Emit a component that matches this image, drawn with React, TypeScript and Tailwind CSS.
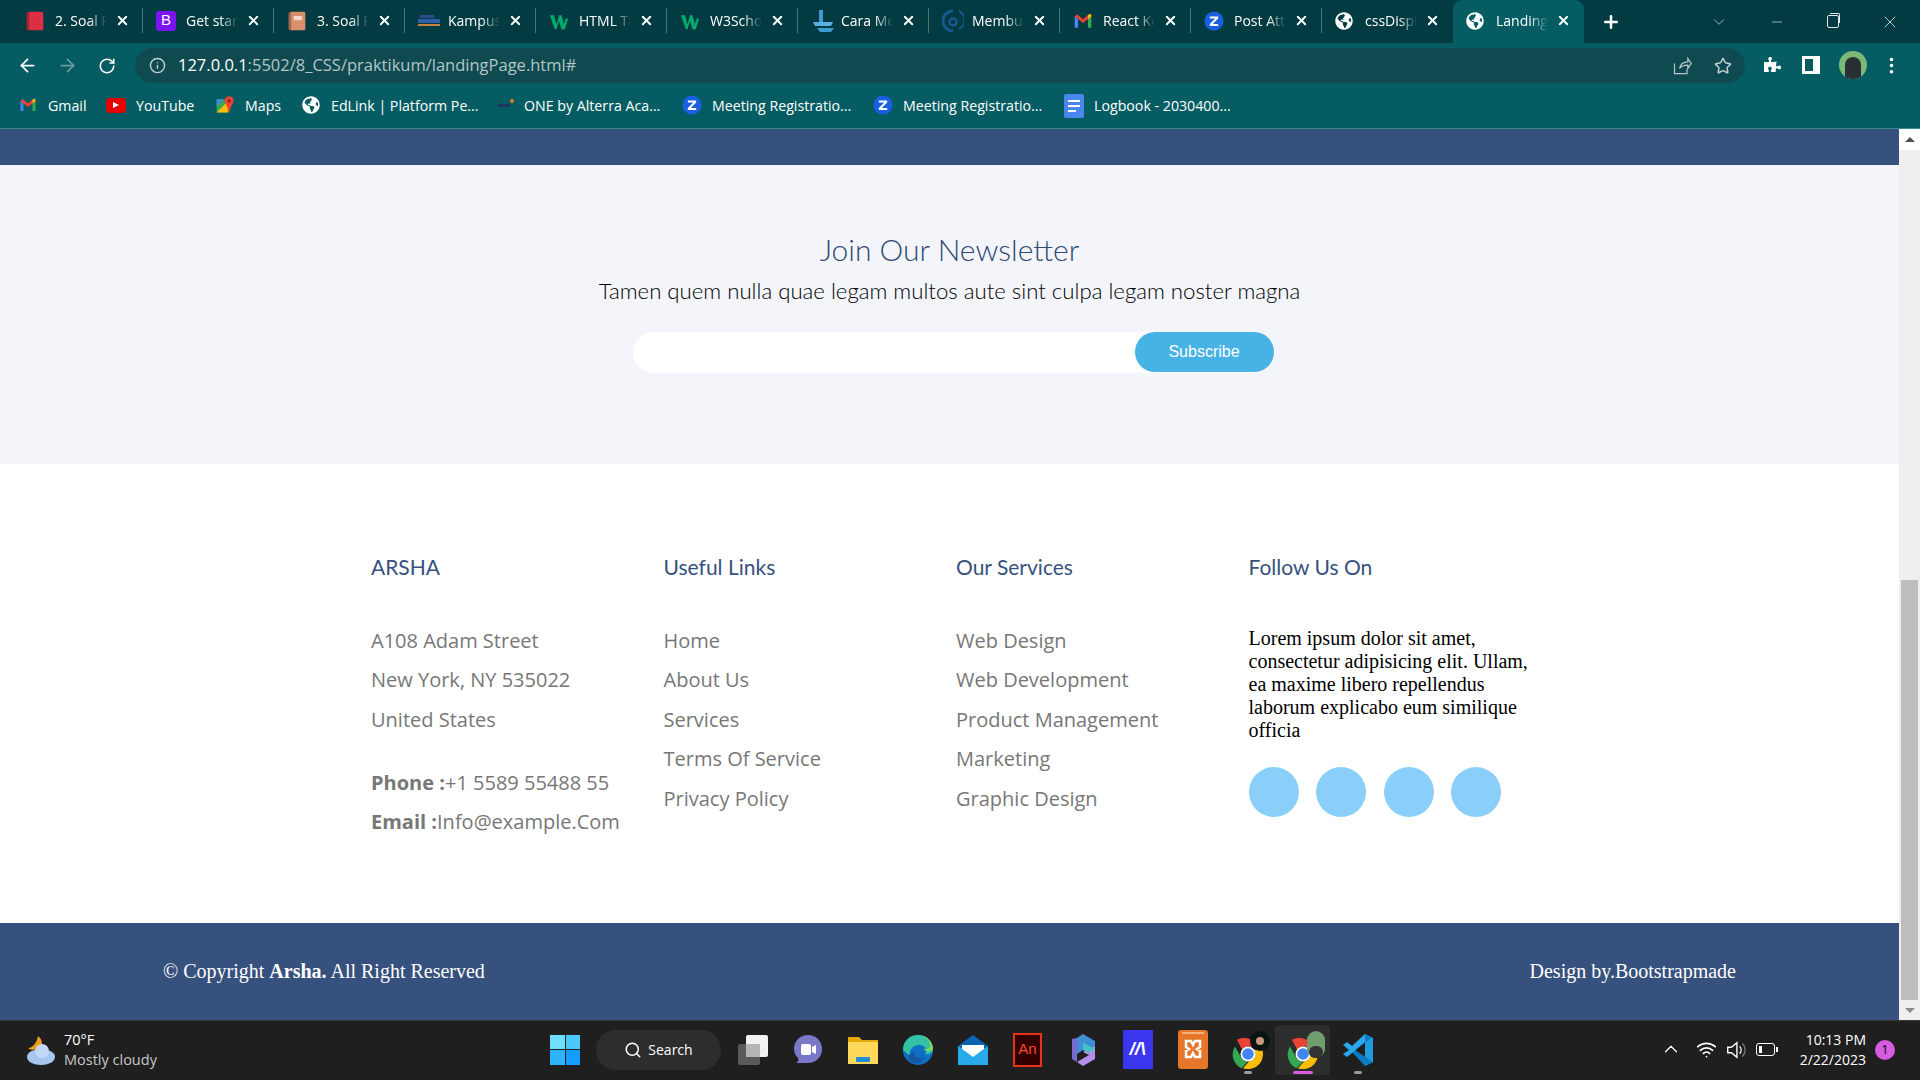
import React from "react";
import {
  ArrowLeft,
  ArrowRight,
  RotateCw,
  Info,
  Star,
  Plus,
  X,
  Minus,
  ChevronDown,
  ChevronUp,
  Wifi,
  Search,
  EllipsisVertical,
} from "lucide-react";
import { FaGlobeAmericas, FaPuzzlePiece } from "react-icons/fa";

const GmailIcon = ({ size = 18 }: { size?: number }) => (
  <svg width={size} height={size} viewBox="0 0 24 24">
    <path d="M2 6v14h4V10z" fill="#4285f4" />
    <path d="M22 6v14h-4V10z" fill="#34a853" />
    <path d="M2 6.5 5 4l7 6 7-6 3 2.500-10 8z" fill="#ea4335" />
    <path d="M18 5v5l4-3.500V5a1.500 1.500 0 0 0-2.500-1z" fill="#fbbc04" />
  </svg>
);

const ZoomIcon = () => (
  <svg width="20" height="20" viewBox="0 0 24 24">
    <circle cx="12" cy="12" r="11.500" fill="#1a5fe0" />
    <path d="M7 6.500h10v2.500l-6.500 6.500H17V18H7v-2.500L13.500 9H7z" fill="#fff" />
  </svg>
);

const WIcon = () => (
  <svg width="20" height="20" viewBox="0 0 24 24">
    <path d="M1 5h5l3 11 3-11h3l3 11 2-7h3l-4 13h-4l-3-10-3 10H7z" fill="#04aa6d" />
  </svg>
);

const BookIcon = ({ color, page }: { color: string; page: string }) => (
  <svg width="20" height="20" viewBox="0 0 24 24">
    <rect x="2" y="1" width="20" height="22" rx="2" fill={color} />
    <rect x="2" y="1" width="3" height="22" fill="#00000040" />
    <rect x="8" y="6" width="10" height="5" rx="1" fill={page} />
  </svg>
);

const BootstrapIcon = () => (
  <div className="w-5 h-5 rounded-[3px] bg-[#7a14f0] text-white flex items-center justify-center text-[15px] font-['Liberation_Sans',sans-serif]">
    B
  </div>
);

const KampusIcon = () => (
  <svg width="22" height="14" viewBox="0 0 22 14">
    <rect x="2" y="1" width="14" height="3" fill="#2d4a8a" />
    <rect x="0" y="5" width="22" height="4" fill="#2f5fa8" />
    <rect x="0" y="10" width="22" height="2" fill="#c9803a" />
  </svg>
);

const CaraIcon = () => (
  <svg width="24" height="24" viewBox="0 0 24 24">
    <path d="M8 1h4v13H8z" fill="#3f9ad0" />
    <path d="M2 13h20l-2 4H4z" fill="#5ab0e0" />
    <path d="M6 19h17l-3 4H9z" fill="#3f9ad0" />
  </svg>
);

const MembuIcon = () => (
  <svg width="22" height="24" viewBox="0 0 22 24">
    <path d="M11 2a10 10 0 1 0 0 20" fill="none" stroke="#17588f" strokeWidth="3" />
    <path d="M17 2a10 10 0 0 1 0 18" fill="none" stroke="#17588f" strokeWidth="2" />
    <circle cx="11" cy="13" r="3.500" fill="none" stroke="#17588f" strokeWidth="2.500" />
  </svg>
);

const Globe = () => <FaGlobeAmericas className="text-white" size={18} />;

const tabs: { title: string; icon: React.ReactNode }[] = [
  { title: "2. Soal Prioritas", icon: <BookIcon color="#dc2f45" page="#dc2f45" /> },
  { title: "Get started", icon: <BootstrapIcon /> },
  { title: "3. Soal Prioritas", icon: <BookIcon color="#d98f6c" page="#f5d8c8" /> },
  { title: "Kampus Merdeka", icon: <KampusIcon /> },
  { title: "HTML Tables", icon: <WIcon /> },
  { title: "W3Schools", icon: <WIcon /> },
  { title: "Cara Membuat", icon: <CaraIcon /> },
  { title: "Membuat", icon: <MembuIcon /> },
  { title: "React Kelas", icon: <GmailIcon size={20} /> },
  { title: "Post Attendance", icon: <ZoomIcon /> },
  { title: "cssDisplay", icon: <Globe /> },
  { title: "Landing Page", icon: <Globe /> },
];

const bookmarks: { title: string; icon: React.ReactNode; width: string }[] = [
  { title: "Gmail", icon: <GmailIcon />, width: "w-[88px]" },
  {
    title: "YouTube",
    icon: (
      <div className="w-5 h-[15px] rounded-[4px] bg-[#e60000] flex items-center justify-center">
        <div className="w-0 h-0 border-y-[3.5px] border-y-transparent border-l-[6px] border-l-white" />
      </div>
    ),
    width: "w-[109px]",
  },
  {
    title: "Maps",
    icon: (
      <svg width="20" height="20" viewBox="0 0 24 24">
        <path d="M2 5h14v16H2z" fill="#34a853" />
        <path d="M2 21 16 7v14z" fill="#fbbc04" />
        <path d="M2 5h8L2 13z" fill="#4285f4" />
        <circle cx="17" cy="7" r="5.500" fill="#ea4335" />
        <path d="M13 10h8l-4 11z" fill="#ea4335" />
        <circle cx="17" cy="7" r="2" fill="#8f1f16" />
      </svg>
    ),
    width: "w-[86px]",
  },
  { title: "EdLink | Platform Pe...", icon: <Globe />, width: "w-[193px]" },
  {
    title: "ONE by Alterra Aca...",
    icon: (
      <div className="w-5 h-5 flex items-center justify-center relative">
        <div className="w-3 h-[3px] bg-[#23345c]" />
        <div className="absolute right-0 top-1 w-1 h-1 rounded-full bg-[#f47c20]" />
      </div>
    ),
    width: "w-[188px]",
  },
  { title: "Meeting Registratio...", icon: <ZoomIcon />, width: "w-[191px]" },
  { title: "Meeting Registratio...", icon: <ZoomIcon />, width: "w-[191px]" },
  {
    title: "Logbook - 2030400...",
    icon: (
      <div className="w-5 h-6 rounded-[2px] bg-[#4a86f0] flex flex-col gap-[3px] justify-center px-1">
        <div className="h-[2px] bg-white" />
        <div className="h-[2px] bg-white" />
        <div className="h-[2px] w-2 bg-white" />
      </div>
    ),
    width: "w-[190px]",
  },
];

const usefulLinks = ["Home", "About Us", "Services", "Terms Of Service", "Privacy Policy"];
const serviceLinks = ["Web Design", "Web Development", "Product Management", "Marketing", "Graphic Design"];

const ChromeIcon = () => (
  <svg width="32" height="32" viewBox="0 0 32 32">
    <path d="M16 1a15 15 0 0 1 13 7.500H16a7.500 7.500 0 0 0-6.500 3.750L3 3.500A15 15 0 0 1 16 1z" fill="#ea4335" transform="rotate(8 16 16)" />
    <path d="M3 8.500 9.500 20a7.500 7.500 0 0 0 6.500 3.500L9.500 30.200A15 15 0 0 1 3 8.500z" fill="#34a853" />
    <path d="M29 8.500A15 15 0 0 1 11 30.200l6-6.800A7.500 7.500 0 0 0 22 12z" fill="#fbbc04" />
    <circle cx="16" cy="16" r="7.500" fill="#fff" />
    <circle cx="16" cy="16" r="5.800" fill="#4285f4" />
  </svg>
);

const taskbarIcons: { icon: React.ReactNode; dot?: string; active?: boolean }[] = [
  {
    icon: (
      <svg width="32" height="32" viewBox="0 0 32 32">
        <rect x="1" y="10" width="22" height="21" rx="2" fill="#5a5a5a" />
        <rect x="9" y="1" width="22" height="22" rx="2" fill="#f2f2f2" />
        <rect x="9" y="10" width="14" height="13" fill="#b5b5b5" />
      </svg>
    ),
  },
  {
    icon: (
      <svg width="30" height="32" viewBox="0 0 30 32">
        <path d="M15 1c8 0 14 6 14 14s-6 14-14 14H3c2-1 3-3 2-5-3-3-4-6-4-9C1 7 7 1 15 1z" fill="#7b77c9" />
        <rect x="8" y="10" width="10" height="11" rx="2" fill="#fff" />
        <path d="m19 13 4-2v9l-4-2z" fill="#fff" />
      </svg>
    ),
  },
  {
    icon: (
      <svg width="32" height="32" viewBox="0 0 32 32">
        <path d="M1 3h11l3 3h16v24H1z" fill="#e3a90d" />
        <path d="M1 8h30v22H1z" fill="#ffd75a" />
        <rect x="9" y="23" width="14" height="5" rx="1" fill="#1e8fe0" />
      </svg>
    ),
  },
  {
    icon: (
      <svg width="32" height="32" viewBox="0 0 32 32">
        <circle cx="16" cy="16" r="15" fill="#0f6fc5" />
        <path d="M1 16C1 7 8 1 16 1c9 0 15 7 15 14 0 4-4 6-8 5 3-4 0-9-6-9-7 0-10 6-9 11z" fill="#35c1a5" />
        <path d="M31 15c0-7-6-14-15-14 6 0 13 5 12 12-2 3-5 2-7 2 4 3 7 3 10 0z" fill="#7ed957" />
        <path d="M12 18c0 5 6 8 11 5-2 5-9 8-14 5-3-2-5-8 3-10z" fill="#1558a8" />
      </svg>
    ),
  },
  {
    icon: (
      <svg width="32" height="32" viewBox="0 0 32 32">
        <path d="M16 1 31 12v19H1V12z" fill="#0a64b4" />
        <path d="M5 11h22v9l-11 6-11-6z" fill="#fff" />
        <path d="M1 12v19h30V12L16 23z" fill="#29aaea" />
      </svg>
    ),
  },
  {
    icon: (
      <div className="w-[29px] h-[34px] bg-[#300] border-2 border-[#e8331c] flex items-center justify-center text-[#ff4a2b] text-[15px] font-['Liberation_Sans',sans-serif]">
        An
      </div>
    ),
  },
  {
    icon: (
      <svg width="28" height="34" viewBox="0 0 28 34">
        <path d="M14 1 26 8v8L14 9v8l-6 4V5z" fill="#3f8fd8" />
        <path d="M3 6v20l5 3V5z" fill="#7a6ad0" />
        <path d="M26 13v13l-12 7-6-4 12-7-6-3z" fill="#b48ee8" />
        <path d="M14 9v8l6 3 6-4z" fill="#48c0c8" />
      </svg>
    ),
  },
  {
    icon: (
      <div className="w-[30px] h-[39px] bg-[#3a36f0] flex items-center justify-center text-white text-[19px] font-bold italic font-['Liberation_Sans',sans-serif]">
        //\
      </div>
    ),
  },
  {
    icon: (
      <svg width="30" height="39" viewBox="0 0 30 39">
        <rect width="30" height="39" rx="3" fill="#e5762a" />
        <rect x="4" y="2" width="22" height="2" fill="#f7b37e" />
        <path d="M8 11h5l2 4 2-4h5v6l-3 2 3 2v6h-5l-2-4-2 4H8v-6l3-2-3-2z" fill="none" stroke="#fff" strokeWidth="2.500" />
      </svg>
    ),
  },
  {
    icon: (
      <div className="relative w-[32px] h-[40px] flex items-end">
        <ChromeIcon />
        <div className="absolute -right-[6px] top-[1px] w-5 h-5 rounded-full bg-[#0b1214] flex items-center justify-center">
          <div className="w-2 h-2 rounded-full bg-[#c89a7c]" />
        </div>
      </div>
    ),
    dot: "w-2 bg-[#9a9a9a]",
  },
  {
    icon: (
      <div className="relative w-[32px] h-[40px] flex items-end">
        <ChromeIcon />
        <div className="absolute -right-[6px] top-[1px] w-[18px] h-[27px] rounded-full bg-[#6f9e6c] flex items-end justify-center">
          <div className="w-[14px] h-3 rounded-full bg-[#333]" />
        </div>
      </div>
    ),
    dot: "w-5 bg-[#d65ce0]",
    active: true,
  },
  {
    icon: (
      <svg width="30" height="34" viewBox="0 0 30 34">
        <path d="M22 1 30 5v24l-8 4z" fill="#1f9ce0" />
        <path d="M22 1 7 17l15 16 8-4-2-1-16-11L28 5z" fill="#0b7ac4" />
        <path d="M22 1v8L9 20l-5 4-4-3 6-4-6-5 4-3 5 4z" fill="#2aa8ee" />
      </svg>
    ),
    dot: "w-2 bg-[#9a9a9a]",
  },
];

function BrowserTab({ title, icon, active, divider }: { title: string; icon: React.ReactNode; active: boolean; divider: boolean }) {
  return (
    <div className={`w-[131px] h-[43px] shrink-0 flex items-center pb-[2px] ${active ? "bg-[#055c62] rounded-t-[9px]" : ""}`}>
      <div className="w-[43px] pl-[13px] shrink-0 flex items-center">{icon}</div>
      <span className="w-[52px] overflow-hidden whitespace-nowrap text-[14px] text-white [mask-image:linear-gradient(to_right,black_65%,transparent)]">
        {title}
      </span>
      <X className="text-white ml-[8px] shrink-0" size={15} strokeWidth={3} />
      {divider && <div className="w-px h-[25px] bg-[#4f7376] ml-auto shrink-0" />}
    </div>
  );
}

function FooterHeading({ children }: { children: React.ReactNode }) {
  return <h4 className="font-['Lato',sans-serif] text-[21px] leading-[30px] text-[#37517e] mb-[39px]">{children}</h4>;
}

function LinkColumn({ title, items }: { title: string; items: string[] }) {
  return (
    <div>
      <FooterHeading>{title}</FooterHeading>
      <ul className="flex flex-col">
        {items.map((item) => (
          <li key={item} className="h-[39.500px] flex items-center text-[20px] text-[#777777]">
            {item}
          </li>
        ))}
      </ul>
    </div>
  );
}

export default function App() {
  return (
    <div className="w-[1920px] h-[1080px] overflow-hidden flex flex-col font-['Open_Sans',sans-serif]">
      {/* tab strip */}
      <div className="h-[43px] bg-[#033b42] flex items-center pl-[12px] shrink-0">
        {tabs.map((tab, i) => (
          <BrowserTab
            key={i}
            title={tab.title}
            icon={tab.icon}
            active={i === tabs.length - 1}
            divider={i < tabs.length - 2}
          />
        ))}
        <Plus className="text-white ml-[17px]" size={20} strokeWidth={3} />
        <ChevronDown className="text-[#c8d6d8] ml-[89px]" size={18} strokeWidth={1} />
        <Minus className="text-[#e0e8e8] ml-[41px]" size={16} strokeWidth={1} />
        <div className="relative w-[12px] h-[13px] ml-[42px] border border-[#e0e8e8] rounded-[2px]">
          <div className="absolute -top-[3px] left-[2px] w-[10px] h-[10px] border-t border-r border-[#e0e8e8] rounded-tr-[2px]" />
        </div>
        <X className="text-[#e0e8e8] ml-[41px]" size={20} strokeWidth={1} />
      </div>

      {/* address bar */}
      <div className="h-[40px] bg-[#055c62] flex items-end pb-0 shrink-0">
        <ArrowLeft className="text-white ml-[17px] mb-[7px]" size={21} />
        <ArrowRight className="text-[#6c9a9d] ml-[19px] mb-[7px]" size={21} />
        <RotateCw className="text-white ml-[20px] mb-[8px]" size={18} />
        <div className="w-[1610px] h-[35px] ml-[19px] rounded-full bg-[#0f4a50] flex items-center">
          <Info className="text-[#c3d0d1] ml-[14px]" size={17} />
          <span className="ml-[12px] text-[16.500px] text-white">
            127.0.0.1<span className="text-[#b4c6c8]">:5502/8_CSS/praktikum/landingPage.html#</span>
          </span>
          <svg className="ml-auto" width="20" height="20" viewBox="0 0 24 24" fill="none" stroke="#b4c6c8" strokeWidth="1.500">
            <path d="M3 9v12h15v-5M9 15c1-5 5-8 10-8V3l4 6-4 6v-4c-4 0-8 1-10 4z" />
          </svg>
          <Star className="text-[#c3d0d1] ml-[22px] mr-[13px]" size={18} strokeWidth={2} />
        </div>
        <FaPuzzlePiece className="text-white ml-[19px] mb-[10px]" size={17} />
        <div className="w-[18px] h-[18px] ml-[21px] mb-[9px] border-[3px] border-white border-r-[7px] border-r-white" />
        <div className="w-[28px] h-[28px] ml-[19px] mb-[4px] rounded-full bg-[#7cb878] flex items-end justify-center overflow-hidden">
          <div className="w-[16px] h-[22px] rounded-t-full bg-[#2a2f33]" />
        </div>
        <EllipsisVertical className="text-white ml-[14px] mb-[7px]" size={21} />
      </div>

      {/* bookmarks */}
      <div className="h-[46px] bg-[#055c62] flex items-center pl-[18px] border-b border-b-[#3d8a8e] shrink-0">
        {bookmarks.map((b, i) => (
          <div key={i} className={`${b.width} shrink-0 flex items-center gap-[10px] text-[14.200px] text-white whitespace-nowrap`}>
            <div className="w-5 flex justify-center shrink-0">{b.icon}</div>
            <span>{b.title}</span>
          </div>
        ))}
      </div>

      {/* page + scrollbar */}
      <div className="flex-1 flex min-h-0">
        <div className="flex-1 flex flex-col min-w-0">
          <div className="h-[36px] bg-[#37517e] shrink-0" />

          <section className="h-[299px] bg-[#f3f5fa] flex flex-col items-center pt-[62px] shrink-0">
            <h2 className="font-['Lato',sans-serif] font-light text-[30px] leading-[44px] text-[#2f4973]">Join Our Newsletter</h2>
            <p className="font-['Lato',sans-serif] font-light text-[22.200px] leading-[30px] text-black mt-[5px]">
              Tamen quem nulla quae legam multos aute sint culpa legam noster magna
            </p>
            <div className="w-[641px] h-[41px] mt-[26px] ml-[7px] rounded-full bg-white flex justify-end">
              <button className="w-[139px] h-[40px] rounded-full bg-[#47b2e4] text-white text-[16px] font-['Liberation_Sans',sans-serif]">
                Subscribe
              </button>
            </div>
          </section>

          <section className="h-[459px] bg-white pl-[371px] pt-[88px] grid grid-cols-[292.500px_292.500px_292.500px_292.500px] content-start shrink-0">
            <div>
              <FooterHeading>ARSHA</FooterHeading>
              <div className="flex flex-col text-[20px] text-[#777777]">
                <p className="h-[39.500px] flex items-center">A108 Adam Street</p>
                <p className="h-[39.500px] flex items-center">New York, NY 535022</p>
                <p className="h-[39.500px] flex items-center">United States</p>
                <p className="h-[39px] mt-[24px] flex items-center whitespace-nowrap">
                  <b>Phone :</b>+1 5589 55488 55
                </p>
                <p className="h-[39.500px] flex items-center whitespace-nowrap">
                  <b>Email :</b>Info@example.Com
                </p>
              </div>
            </div>
            <LinkColumn title="Useful Links" items={usefulLinks} />
            <LinkColumn title="Our Services" items={serviceLinks} />
            <div>
              <FooterHeading>Follow Us On</FooterHeading>
              <p className="w-[285px] pt-[6px] font-['Liberation_Serif',serif] text-[20px] leading-[23px] text-black">
                Lorem ipsum dolor sit amet, consectetur adipisicing elit. Ullam, ea maxime libero repellendus laborum
                explicabo eum similique officia
              </p>
              <div className="flex gap-[17.500px] mt-[25px]">
                <div className="w-[50px] h-[50px] rounded-full bg-[#89cff9]" />
                <div className="w-[50px] h-[50px] rounded-full bg-[#89cff9]" />
                <div className="w-[50px] h-[50px] rounded-full bg-[#89cff9]" />
                <div className="w-[50px] h-[50px] rounded-full bg-[#89cff9]" />
              </div>
            </div>
          </section>

          <footer className="flex-1 bg-[#37517e] flex items-center justify-between pl-[163px] pr-[163px] pb-[2px] font-['Liberation_Serif',serif] text-[20px] text-white">
            <p>
              © Copyright <b>Arsha.</b> All Right Reserved
            </p>
            <p>Design by.Bootstrapmade</p>
          </footer>
        </div>

        <div className="w-[21px] bg-[#efefef] flex flex-col items-center shrink-0">
          <div className="h-[21px] flex items-center justify-center bg-white w-full shrink-0">
            <div className="w-0 h-0 border-x-[5px] border-x-transparent border-b-[5px] border-b-[#505050]" />
          </div>
          <div className="h-[430px] shrink-0" />
          <div className="w-[17px] h-[420px] bg-[#bdbdbd] shrink-0" />
          <div className="flex-1 w-full flex items-center justify-center">
            <div className="w-0 h-0 border-x-[5px] border-x-transparent border-t-[5px] border-t-[#8a8a8a]" />
          </div>
        </div>
      </div>

      {/* windows taskbar */}
      <div className="h-[60px] bg-[#1f1f1f] border-t border-t-[#3a3a3a] pb-[2px] flex items-center shrink-0 relative">
        <svg className="ml-[24px] shrink-0" width="32" height="32" viewBox="0 0 32 32">
          <path d="M14 2c4 3 5 8 3 12l-9 2c-2-1-3-1-4-2 5 0 9-6 10-12z" fill="#f09a1f" />
          <ellipse cx="17" cy="23" rx="14" ry="8" fill="#a8c6f0" />
          <circle cx="18" cy="17" r="7" fill="#c5d8f5" />
        </svg>
        <div className="ml-[8px] w-[120px] shrink-0 flex flex-col leading-[20px]">
          <span className="text-[14.500px] text-white">70°F</span>
          <span className="text-[14.500px] text-[#c8c8c8]">Mostly cloudy</span>
        </div>

        <div className="ml-[366px] w-[30px] h-[30px] shrink-0 grid grid-cols-2 grid-rows-2 gap-[1px]">
          <div className="bg-[#6fe0fb]" />
          <div className="bg-[#4cc9fa]" />
          <div className="bg-[#2db4fb]" />
          <div className="bg-[#149dfb]" />
        </div>
        <div className="ml-[16px] w-[125px] h-[40px] rounded-full bg-[#2d2d2d] shrink-0 flex items-center justify-center gap-[6px] text-[14px] text-white">
          <Search size={18} />
          Search
        </div>

        <div className="ml-[4px] flex items-center shrink-0">
          {taskbarIcons.map((item, i) => (
            <div
              key={i}
              className={`w-[55px] h-[50px] flex flex-col items-center justify-center gap-[3px] relative rounded-[4px] ${
                item.active ? "bg-[#2d2d2d]" : ""
              }`}
            >
              {item.icon}
              {item.dot && <div className={`absolute bottom-[1px] h-[3px] rounded-full ${item.dot}`} />}
            </div>
          ))}
        </div>

        <ChevronUp className="absolute left-[1660px] top-[17px] text-white" size={22} strokeWidth={1.300} />
        <Wifi className="absolute left-[1696px] top-[18px] text-white" size={21} />
        <svg className="absolute left-[1725px] top-[18px]" width="22" height="22" viewBox="0 0 24 24" fill="none" stroke="#fff" strokeWidth="1.500">
          <path d="M3 9v6h4l6 5V4L7 9z" />
          <path d="M16 8a6 6 0 0 1 0 8" />
          <path d="M19 5a10 10 0 0 1 0 14" stroke="#777" />
        </svg>
        <div className="absolute left-[1756px] top-[22px] w-[19px] h-[13px] rounded-[3px] border border-white flex p-[2px]">
          <div className="w-[3px] bg-white" />
        </div>
        <div className="absolute left-[1776px] top-[26px] w-[2px] h-[5px] bg-white" />
        <div className="absolute right-[54px] top-[9px] text-right text-[14px] leading-[20px] text-white">
          <p>10:13 PM</p>
          <p>2/22/2023</p>
        </div>
        <div className="absolute left-[1875px] top-[19px] w-5 h-5 rounded-full bg-[#d65ce0] flex items-center justify-center text-[12px] text-black">
          1
        </div>
      </div>
    </div>
  );
}
